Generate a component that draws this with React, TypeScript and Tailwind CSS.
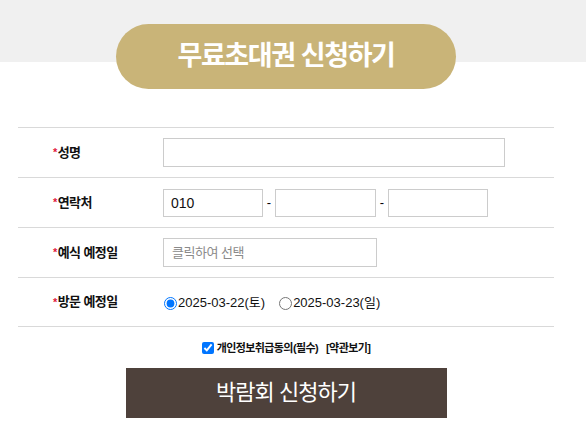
import React from 'react';

const font = "font-['Liberation_Sans','Noto_Sans_CJK_KR',sans-serif]";

const Label: React.FC<{ text: string }> = ({ text }) => (
  <div className="w-[145px] shrink-0 pl-[35px] flex items-center text-[13px] font-bold tracking-[-0.6px] text-[#111]">
    <span className="text-[#e3183c] text-[11px] mr-[1px]">*</span>
    {text}
  </div>
);

const Row: React.FC<{ label: string; last?: boolean; children: React.ReactNode }> = ({ label, last, children }) => (
  <div
    className={
      'flex items-center h-[50px] border-t border-[#d9d9d9]' + (last ? ' border-b' : '')
    }
  >
    <Label text={label} />
    <div className="flex items-center flex-1">{children}</div>
  </div>
);

const App: React.FC = () => {
  return (
    <div className={`${font} min-h-[443px] bg-[linear-gradient(to_bottom,#f0f0f0_62px,#ffffff_62px)]`}>
      <div className="ml-[18px] w-[536px] pt-[24px]">
        <div className="mx-auto w-[340px] h-[65px] rounded-full bg-[#c9b478] flex items-center justify-center text-white text-[27px] font-bold tracking-[-1.4px]">
          무료초대권 신청하기
        </div>

        <div className="mt-[38px]">
          <Row label="성명">
            <input className="w-[342px] h-[29px] border border-[#cccccc] outline-none px-2" />
          </Row>
          <Row label="연락처">
            <input
              defaultValue="010"
              className="w-[100px] h-[28px] border border-[#cccccc] outline-none pl-[7px] text-[14px] text-[#111]"
            />
            <span className="w-[12px] text-center text-[13px]">-</span>
            <input className="w-[101px] h-[28px] border border-[#cccccc] outline-none" />
            <span className="w-[12px] text-center text-[13px]">-</span>
            <input className="w-[100px] h-[28px] border border-[#cccccc] outline-none" />
          </Row>
          <Row label="예식 예정일">
            <input
              placeholder="클릭하여 선택"
              className="w-[214px] h-[29px] border border-[#cccccc] outline-none pl-[8px] text-[13px] tracking-[-0.5px] placeholder:text-[#8a8a8a]"
            />
          </Row>
          <Row label="방문 예정일" last>
            <label className="flex items-center text-[13px] text-[#111] mt-[2px]">
              <input type="radio" name="visit" defaultChecked className="m-0 ml-[1px] mr-[1px] w-[13px] h-[13px]" />
              2025-03-22(토)
            </label>
            <label className="flex items-center ml-[14px] text-[13px] text-[#111] mt-[2px]">
              <input type="radio" name="visit" className="m-0 mr-[1px] w-[13px] h-[13px]" />
              2025-03-23(일)
            </label>
          </Row>
        </div>

        <div className="flex items-center justify-center mt-[13px] text-[11px] font-bold tracking-[-0.6px] text-[#111]">
          <input type="checkbox" defaultChecked className="m-0 mr-[3px] w-[12px] h-[12px]" />
          <span>개인정보취급동의(필수)</span>
          <span className="ml-[8px]">[약관보기]</span>
        </div>

        <div className="flex justify-center mt-[11px]">
          <button className="w-[321px] h-[50px] bg-[#4e413b] text-white text-[22px] tracking-[-1px]">
            박람회 신청하기
          </button>
        </div>
      </div>
    </div>
  );
};

export default App;
